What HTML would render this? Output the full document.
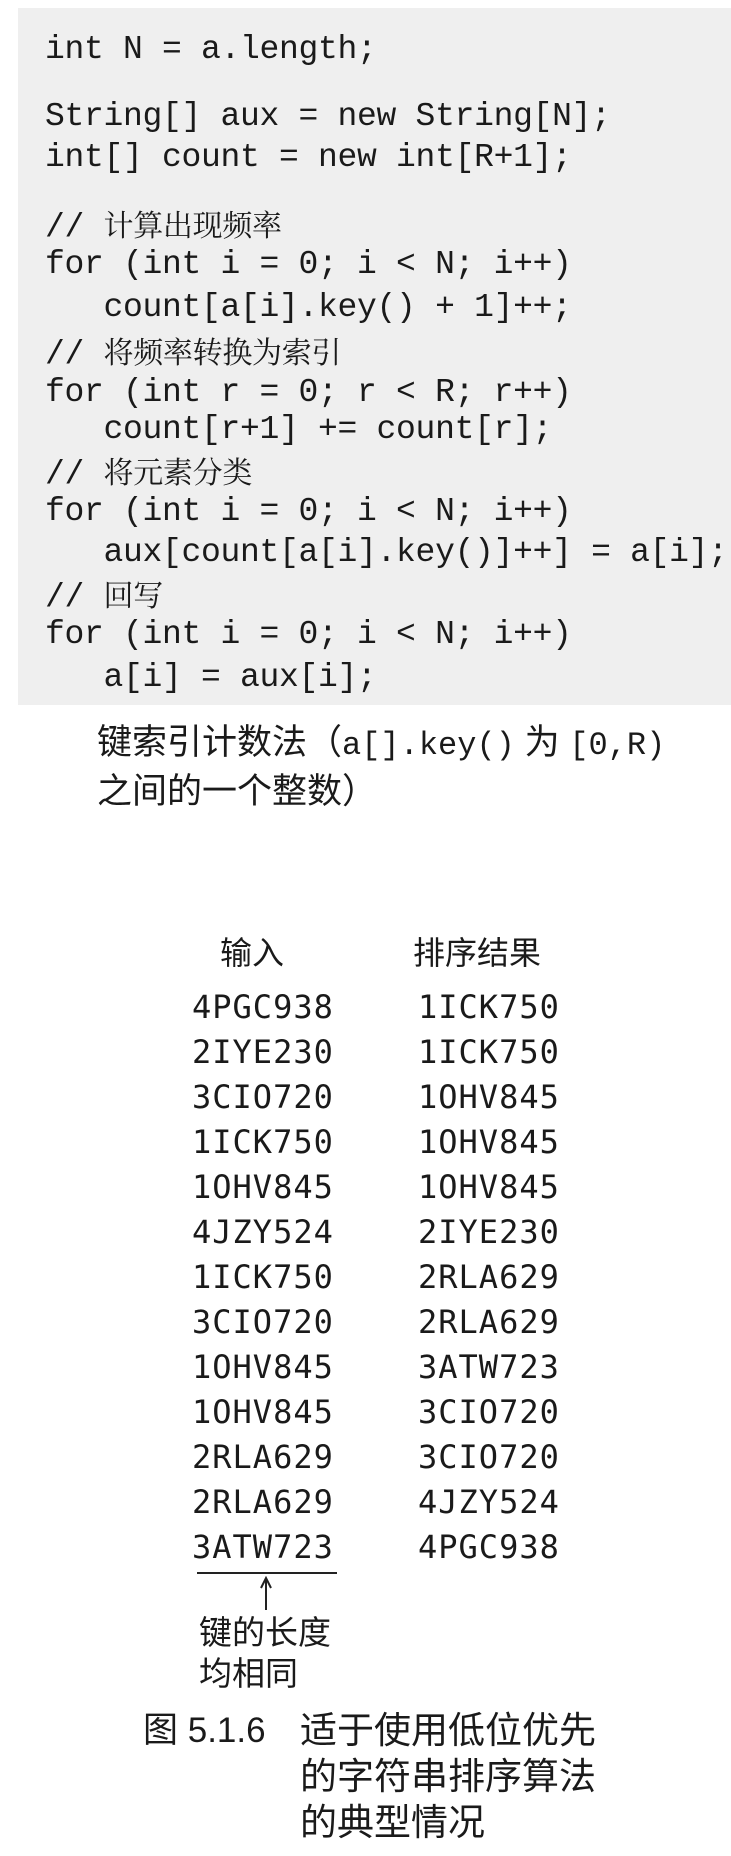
<!DOCTYPE html>
<html><head><meta charset="utf-8"><style>
html,body{margin:0;padding:0;background:#fff;}
body{width:731px;height:1856px;position:relative;overflow:hidden;color:#1a1a1a;}
.bg{position:absolute;left:18px;top:8px;width:713px;height:697px;background:#efefef;}
.c{position:absolute;font-family:"Liberation Mono","DejaVu Sans Mono",monospace;font-size:33px;line-height:40px;white-space:pre;letter-spacing:-0.3px;}
.k{font-family:"Noto Serif CJK SC","WenQuanYi Zen Hei",serif;font-size:30px;}
.t{position:absolute;font-family:"DejaVu Sans Mono","Liberation Mono",monospace;font-size:32px;line-height:40px;white-space:pre;letter-spacing:1px;}
.z{position:absolute;font-family:"Liberation Sans","Noto Sans CJK SC",sans-serif;white-space:pre;}
.m{font-family:"Liberation Mono",monospace;}
</style></head><body>
<div class="bg"></div>
<div class="c" style="left:45px;top:30px">int N = a.length;</div>
<div class="c" style="left:45px;top:97px">String[] aux = new String[N];</div>
<div class="c" style="left:45px;top:138px">int[] count = new int[R+1];</div>
<div class="c" style="left:45px;top:203px">// <span class="k">计算出现频率</span></div>
<div class="c" style="left:45px;top:245px">for (int i = 0; i &lt; N; i++)</div>
<div class="c" style="left:45px;top:288px">   count[a[i].key() + 1]++;</div>
<div class="c" style="left:45px;top:330px">// <span class="k">将频率转换为索引</span></div>
<div class="c" style="left:45px;top:373px">for (int r = 0; r &lt; R; r++)</div>
<div class="c" style="left:45px;top:410px">   count[r+1] += count[r];</div>
<div class="c" style="left:45px;top:450px">// <span class="k">将元素分类</span></div>
<div class="c" style="left:45px;top:492px">for (int i = 0; i &lt; N; i++)</div>
<div class="c" style="left:45px;top:533px">   aux[count[a[i].key()]++] = a[i];</div>
<div class="c" style="left:45px;top:573px">// <span class="k">回写</span></div>
<div class="c" style="left:45px;top:615px">for (int i = 0; i &lt; N; i++)</div>
<div class="c" style="left:45px;top:658px">   a[i] = aux[i];</div>

<div class="z" style="left:97px;top:720px;font-size:35px;line-height:46px">键索引计数法（<span class="m" style="font-size:32px">a[].key()</span> 为 <span class="m" style="font-size:32px">[0,R)</span>
之间的一个整数）</div>

<div class="z" style="left:220px;top:928px;font-size:32px">输入</div>
<div class="z" style="left:413px;top:928px;font-size:32px">排序结果</div>

<div class="t" style="left:192px;top:985px;line-height:45px">4PGC938
2IYE230
3CIO720
1ICK750
1OHV845
4JZY524
1ICK750
3CIO720
1OHV845
1OHV845
2RLA629
2RLA629
3ATW723</div>
<div class="t" style="left:418px;top:985px;line-height:45px">1ICK750
1ICK750
1OHV845
1OHV845
1OHV845
2IYE230
2RLA629
2RLA629
3ATW723
3CIO720
3CIO720
4JZY524
4PGC938</div>

<div style="position:absolute;left:197px;top:1572px;width:140px;height:2px;background:#222"></div>
<svg style="position:absolute;left:258px;top:1576px" width="16" height="36"><path d="M8 4 L8 34" stroke="#222" stroke-width="2"/><path d="M3 12 L8 2 L13 12" fill="none" stroke="#222" stroke-width="2"/></svg>
<div class="z" style="left:199px;top:1612px;font-size:33px;line-height:41px">键的长度
均相同</div>

<div class="z" style="left:143px;top:1708px;font-size:35px;line-height:46px">图 5.1.6</div>
<div class="z" style="left:300px;top:1708px;font-size:37px;line-height:46px">适于使用低位优先
的字符串排序算法
的典型情况</div>
</body></html>
